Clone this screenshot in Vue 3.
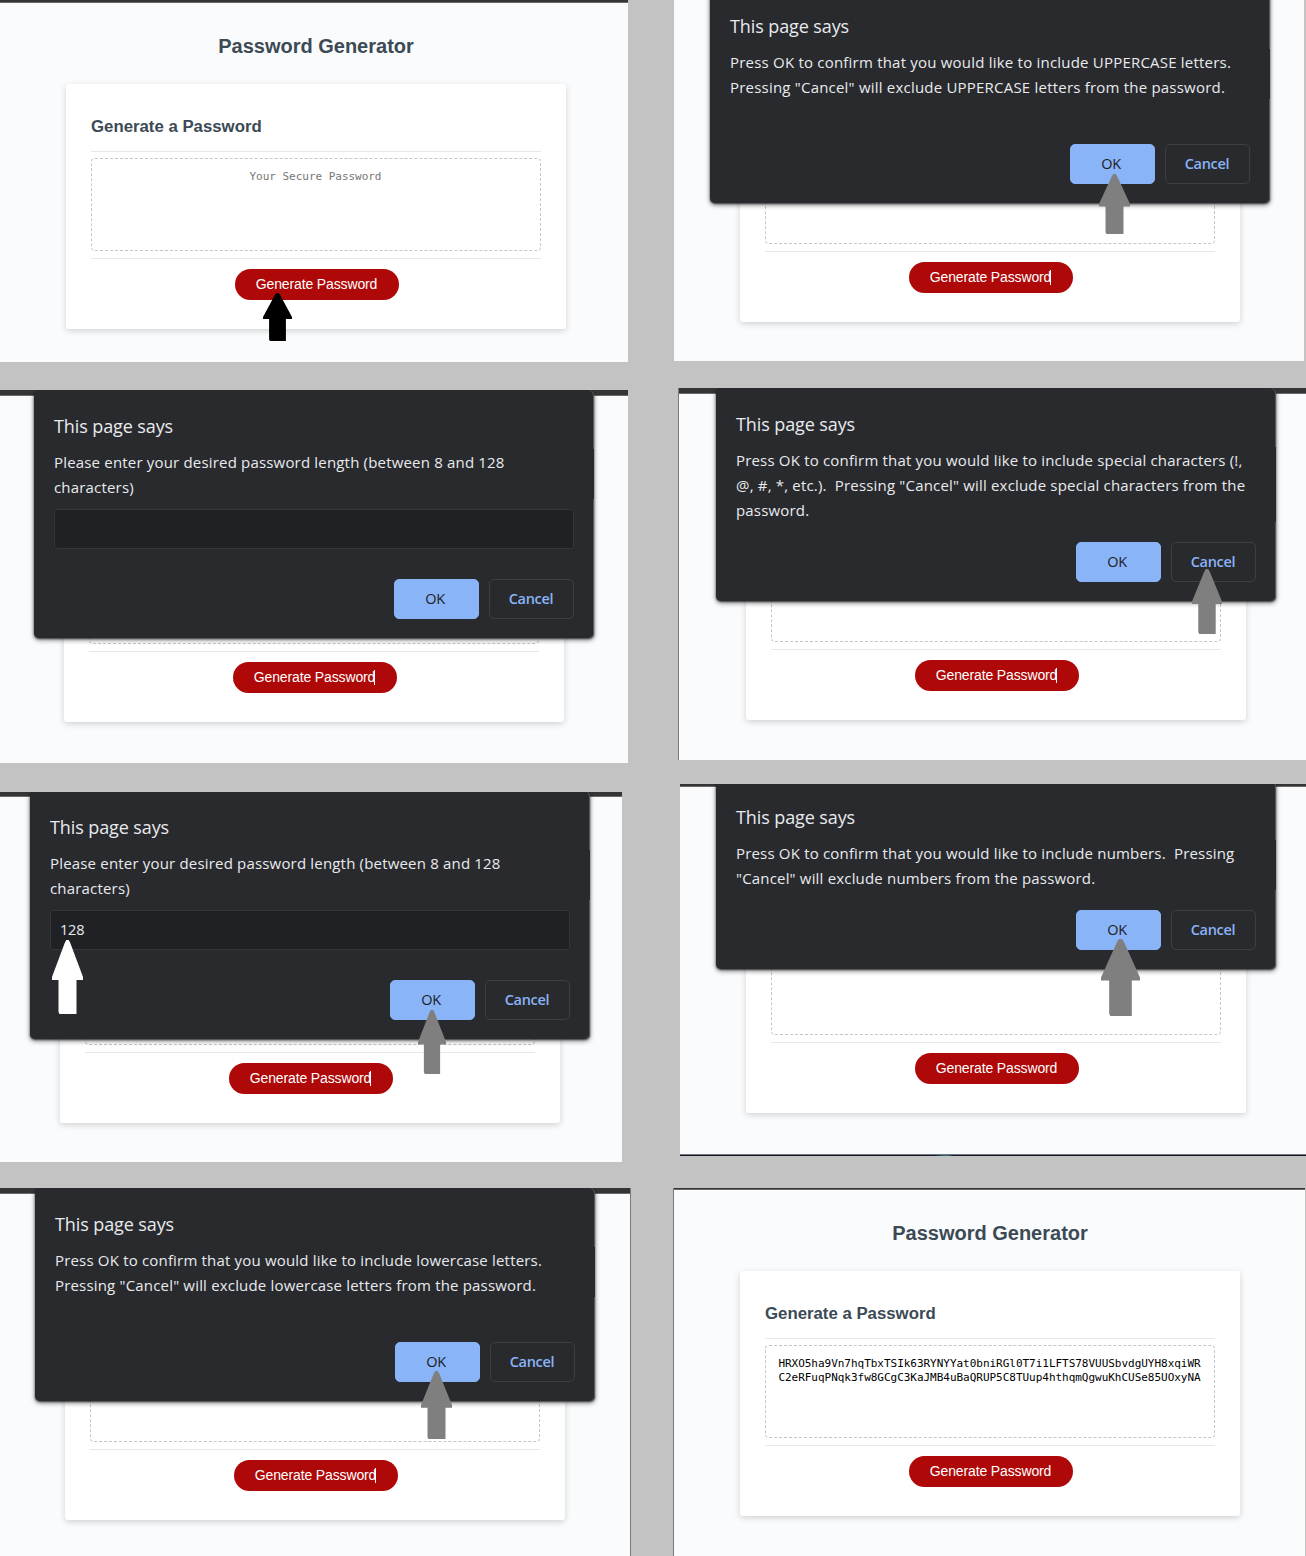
<script setup>
const columns = [
  {
    id: 'left',
    panels: [
      { id: 'start', titled: true, placeholder: 'Your Secure Password', arrows: ['black'] },
      {
        id: 'length',
        caret: true,
        prompt: true,
        lines: ['Please enter your desired password length (between 8 and 128', 'characters)'],
        arrows: [],
      },
      {
        id: 'length-filled',
        caret: true,
        prompt: true,
        value: '128',
        lines: ['Please enter your desired password length (between 8 and 128', 'characters)'],
        arrows: ['white', 'gray'],
      },
      {
        id: 'lowercase',
        caret: true,
        tall: true,
        lines: [
          'Press OK to confirm that you would like to include lowercase letters.',
          'Pressing "Cancel" will exclude lowercase letters from the password.',
        ],
        arrows: ['gray'],
      },
    ],
  },
  {
    id: 'right',
    panels: [
      {
        id: 'uppercase',
        caret: true,
        tall: true,
        lines: [
          'Press OK to confirm that you would like to include UPPERCASE letters.',
          'Pressing "Cancel" will exclude UPPERCASE letters from the password.',
        ],
        arrows: ['gray'],
      },
      {
        id: 'special',
        caret: true,
        lines: [
          'Press OK to confirm that you would like to include special characters (!,',
          '@, #, *, etc.).  Pressing "Cancel" will exclude special characters from the',
          'password.',
        ],
        arrows: ['gray'],
      },
      {
        id: 'numbers',
        lines: [
          'Press OK to confirm that you would like to include numbers.  Pressing',
          '"Cancel" will exclude numbers from the password.',
        ],
        arrows: ['gray'],
      },
      {
        id: 'result',
        titled: true,
        password: [
          'HRXO5ha9Vn7hqTbxTSIk63RYNYYat0bniRGl0T7i1LFTS78VUUSbvdgUYH8xqiWR',
          'C2eRFuqPNqk3fw8GCgC3KaJMB4uBaQRUP5C8TUup4hthqmQgwuKhCUSe85UOxyNA',
        ],
        arrows: [],
      },
    ],
  },
]
</script>

<template>
  <main class="board">
    <div v-for="col in columns" :key="col.id" class="column" :class="col.id">
      <section v-for="p in col.panels" :key="p.id" class="panel" :class="'p-' + p.id">
        <div class="strip"></div>
        <header class="head">
          <h1 v-if="p.titled">Password Generator</h1>
        </header>
        <div class="card">
          <div class="card-head">
            <h2 v-if="p.titled">Generate a Password</h2>
          </div>
          <div class="output">
            <span v-if="p.placeholder" class="placeholder">{{ p.placeholder }}</span>
            <template v-if="p.password">
              <span v-for="row in p.password" :key="row" class="row">{{ row }}</span>
            </template>
          </div>
          <div class="card-foot">
            <button class="generate">
              <span class="label" :class="{ caret: p.caret }">Generate Password</span>
            </button>
          </div>
        </div>

        <div v-if="p.lines" class="dialog">
          <div class="dialog-title">This page says</div>
          <div class="message" :class="{ tall: p.tall }">
            <div v-for="line in p.lines" :key="line" class="line">{{ line }}</div>
          </div>
          <div v-if="p.prompt" class="field">{{ p.value }}</div>
          <div class="actions" :class="{ low: p.prompt }">
            <button class="ok">OK</button>
            <button class="cancel">Cancel</button>
          </div>
        </div>

        <svg
          v-for="a in p.arrows"
          :key="a"
          class="arrow"
          :class="a"
          viewBox="0 0 100 100"
          preserveAspectRatio="none"
        >
          <path d="M46 0H54L59 4L100 50V54H79V100H24L21 97V54H0V50L41 4Z" />
        </svg>
      </section>
    </div>
  </main>
</template>

<style>
body {
  margin: 0;
  background: #c3c3c3;
}
</style>

<style scoped>
.board {
  display: flex;
  justify-content: space-between;
  width: 1306px;
  height: 1556px;
  overflow: hidden;
  background: #c3c3c3;
  font-family: "Liberation Sans", Arial, sans-serif;
}
.column {
  display: flex;
  flex-direction: column;
}
.left { width: 631px; }
.right { width: 633px; }

.panel {
  --bar: 5px;
  --bar-color: #353535;
  position: relative;
  box-sizing: border-box;
  flex: none;
  overflow: hidden;
  background: #fafbfd;
}
.strip {
  box-sizing: content-box;
  height: var(--bar);
  background: var(--bar-color);
  border-bottom: 1px solid #696969;
}
.head {
  display: flex;
  align-items: flex-end;
  justify-content: center;
  width: 500px;
  height: calc(var(--card-y) - var(--bar) - 1px);
  margin-left: var(--card-x);
}
h1 {
  margin: 0 0 26px;
  color: #3b4a54;
  font-size: 20px;
  line-height: 24px;
}
.card {
  box-sizing: border-box;
  width: 500px;
  height: 245px;
  margin-left: var(--card-x);
  padding: 0 25px;
  border-radius: 3px;
  background: #fff;
  box-shadow: 0 2px 6px rgba(0, 0, 0, 0.17);
}
.card-head {
  box-sizing: border-box;
  height: 68px;
  padding-top: 33px;
  border-bottom: 1px solid #e8e8e8;
}
h2 {
  margin: 0;
  color: #3b4a54;
  font-size: 16.8px;
  line-height: 20px;
}
.output {
  box-sizing: border-box;
  display: flex;
  flex-direction: column;
  align-items: center;
  height: 93px;
  margin: 6px 0 7px;
  padding: 11px 1px 0 0;
  border: 1px dashed #c3c6cd;
  border-radius: 4px;
  font-family: "DejaVu Sans Mono", monospace;
  font-size: 11px;
  line-height: 14px;
  letter-spacing: -0.025px;
  color: #000;
}
.placeholder { color: #757575; }
.card-foot {
  display: flex;
  justify-content: center;
  padding: 10px 0 0 2px;
  border-top: 1px solid #e8e8e8;
}
.generate {
  width: 164px;
  height: 31px;
  padding: 0 1px 0 0;
  border: 0;
  border-radius: 16px;
  background: #ae0808;
  color: #fff;
  font: 14px/31px "Liberation Sans", Arial, sans-serif;
  letter-spacing: -0.13px;
}
.label {
  position: relative;
  display: inline-block;
}
.caret::after {
  content: "";
  position: absolute;
  top: 8px;
  right: 0;
  width: 1px;
  height: 15px;
  background: #fff;
}

.dialog {
  position: absolute;
  top: var(--dlg-y);
  left: var(--dlg-x);
  box-sizing: border-box;
  width: 560px;
  padding: 24px 20px 19px;
  border-radius: 5px;
  background: #292a2d;
  box-shadow: inset -1px 0 #58595c, 0 1px 2px rgba(0, 0, 0, 0.6), 0 2px 5px rgba(0, 0, 0, 0.5);
  color: #e8eaed;
  font-family: "Open Sans", "Noto Sans", sans-serif;
}
.dialog-title {
  font-size: 18px;
  line-height: 24px;
  letter-spacing: -0.1px;
}
.message {
  position: relative;
  margin-top: 12px;
  font-size: 15px;
  line-height: 25px;
  letter-spacing: 0.18px;
}
/* The message area runs over the dialog's right edge highlight. */
.message::after {
  content: "";
  position: absolute;
  top: -1px;
  right: -20px;
  width: 1px;
  height: 50px;
  background: #292a2d;
}
.line { white-space: pre; }
.tall { padding-bottom: 25px; }
.field {
  box-sizing: border-box;
  height: 40px;
  margin-top: 9px;
  padding-left: 9px;
  border: 1px solid #35363a;
  border-radius: 3px;
  background: #202124;
  font-size: 14.5px;
  line-height: 37px;
  letter-spacing: -0.2px;
}
.actions {
  display: flex;
  justify-content: flex-end;
  gap: 10px;
  margin-top: 19px;
}
.low { margin-top: 30px; }
.ok,
.cancel {
  box-sizing: border-box;
  width: 85px;
  height: 40px;
  padding: 0;
  border: 1px solid #8ab4f8;
  border-radius: 5px;
  background: #8ab4f8;
  color: #202124;
  font: 500 14.5px/36px "Open Sans", "Noto Sans", sans-serif;
  letter-spacing: -0.3px;
}
.ok { padding: 0 3px 1px 0; }
.cancel {
  padding-right: 1px;
  border-color: #3c4043;
  background: transparent;
  color: #8ab4f8;
  font-weight: 600;
}

.arrow {
  position: absolute;
  fill: #7f7f7f;
}
.black { fill: #000; }
.white { fill: #fff; }

/* Left column */
.p-start { --bar: 2px; --card-x: 66px; --card-y: 84px; width: 628px; height: 362px; margin-bottom: 28px; }
.p-start .arrow { left: 263px; top: 293px; width: 29px; height: 48px; }

.p-length { --card-x: 64px; --card-y: 87px; --dlg-x: 34px; --dlg-y: 0px; width: 628px; height: 373px; margin-bottom: 29px; }

.p-length-filled { --bar: 4px; --card-x: 60px; --card-y: 86px; --dlg-x: 30px; --dlg-y: -1px; width: 622px; height: 370px; margin-bottom: 26px; }
.p-length-filled .white { left: 52px; top: 148px; width: 31px; height: 74px; }
.p-length-filled .gray { left: 418px; top: 218px; width: 28px; height: 64px; }

.p-lowercase { --card-x: 65px; --card-y: 87px; --dlg-x: 35px; --dlg-y: 0px; width: 631px; height: 368px; border-right: 1px solid #7b7b7b; }
.p-lowercase .arrow { left: 421px; top: 183px; width: 31px; height: 68px; }

/* Right column */
.p-uppercase { --bar: 0px; --bar-color: #fafbfd; --card-x: 66px; --card-y: 77px; --dlg-x: 36px; --dlg-y: -10px; width: 630px; height: 361px; margin: 0 0 27px 1px; }
.p-uppercase .strip { border-color: #fafbfd; }
.p-uppercase .arrow { left: 425px; top: 174px; width: 31px; height: 60px; }
.p-uppercase .message { letter-spacing: 0.21px; }

.p-special { --card-x: 67px; --card-y: 87px; --dlg-x: 37px; --dlg-y: 0px; width: 628px; height: 372px; margin: 0 0 24px 5px; border-left: 1px solid #7b7b7b; }
.p-special .message::after { height: 75px; }
.p-special .arrow { left: 513px; top: 181px; width: 30px; height: 65px; }

.p-numbers { --bar: 2px; --card-x: 66px; --card-y: 84px; --dlg-x: 36px; --dlg-y: -3px; width: 626px; height: 372px; margin: 0 0 32px 7px; }
.p-numbers::after {
  content: "";
  position: absolute;
  left: 0;
  right: 0;
  bottom: 0;
  height: 1px;
  border-top: 1px solid #747679;
  background: linear-gradient(90deg, #10182c 254px, #2b6f8c 266px, #10182c 274px);
}
.p-numbers .arrow { left: 421px; top: 155px; width: 39px; height: 77px; }

.p-result { --bar: 1px; --card-x: 66px; --card-y: 83px; width: 632px; height: 368px; margin-left: 0; border-left: 1px solid #7b7b7b; }
</style>
